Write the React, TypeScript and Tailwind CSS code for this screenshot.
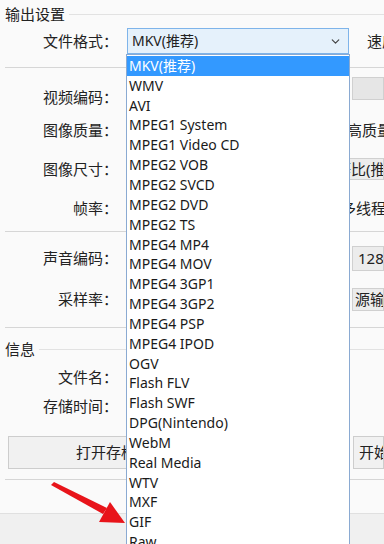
import { ChevronDown } from 'lucide-react';

const formats = [
  'MKV(推荐)',
  'WMV',
  'AVI',
  'MPEG1 System',
  'MPEG1 Video CD',
  'MPEG2 VOB',
  'MPEG2 SVCD',
  'MPEG2 DVD',
  'MPEG2 TS',
  'MPEG4 MP4',
  'MPEG4 MOV',
  'MPEG4 3GP1',
  'MPEG4 3GP2',
  'MPEG4 PSP',
  'MPEG4 IPOD',
  'OGV',
  'Flash FLV',
  'Flash SWF',
  'DPG(Nintendo)',
  'WebM',
  'Real Media',
  'WTV',
  'MXF',
  'GIF',
  'Raw',
];

function Label({ text }: { text: string }) {
  return <div className="w-[118px] shrink-0 text-right">{text}</div>;
}

function Separator() {
  return <div className="h-px bg-[#d6d6d6] ml-[5px]" />;
}

export default function App() {
  return (
    <div
      className="relative w-[384px] h-[544px] overflow-hidden bg-[#fafafa] text-[15px] text-[#222] leading-none"
      style={{ fontFamily: '"Noto Sans", "Noto Sans CJK SC", sans-serif' }}
    >
      {/* Output settings */}
      <div className="h-[28px] flex items-center pl-[5px]">
        <span className="pr-1">输出设置</span>
        <div className="flex-1 h-px bg-[#e2e2e2]" />
      </div>

      <div className="h-[26px] flex items-center whitespace-nowrap">
        <Label text="文件格式：" />
        <div className="ml-[9px] w-[222px] shrink-0 h-[26px] border border-[#7eb4ea] bg-[#e5f1fb] flex items-center justify-between pl-[4px] pr-[6px] text-[14px]">
          <span>MKV(推荐)</span>
          <ChevronDown className="w-[13px] h-[13px] text-[#444]" strokeWidth={2.2} />
        </div>
        <span className="ml-[18px] shrink-0">速度：</span>
      </div>

      <div className="h-[13px]" />
      <Separator />

      <div className="h-[38px] flex items-start pt-[17px] mt-[5px]">
        <Label text="视频编码：" />
        <div className="w-[231px] shrink-0" />
        <div className="flex-1 -mt-[13px] h-[23px] bg-[#e6e6e6] border border-[#d0d0d0] ml-[3px]" />
      </div>
      <div className="h-[38px] flex items-center whitespace-nowrap">
        <Label text="图像质量：" />
        <div className="w-[214px] shrink-0" />
        <span className="shrink-0">较高质量</span>
      </div>
      <div className="h-[40px] flex items-center">
        <Label text="图像尺寸：" />
        <div className="w-[231px] shrink-0" />
        <div className="flex-1 h-[22px] bg-[#ececec] border border-[#d0d0d0] flex items-center -ml-[14px] whitespace-nowrap overflow-hidden">
          <span>等比(推荐)</span>
        </div>
      </div>
      <div className="h-[38px] flex items-center whitespace-nowrap">
        <Label text="帧率：" />
        <div className="w-[223px] shrink-0" />
        <span className="shrink-0">多线程</span>
      </div>

      <div className="h-[4px]" />
      <Separator />

      <div className="h-[41px] flex items-center mt-[6px]">
        <Label text="声音编码：" />
        <div className="w-[234px] shrink-0" />
        <div className="flex-1 h-[25px] bg-[#ececec] border border-[#d0d0d0] flex items-center pl-[5px] whitespace-nowrap overflow-hidden">
          <span>128 kbps</span>
        </div>
      </div>
      <div className="h-[40px] flex items-center">
        <Label text="采样率：" />
        <div className="w-[234px] shrink-0" />
        <div className="flex-1 h-[23px] bg-[#ececec] border border-[#d0d0d0] flex items-center pl-[2px] whitespace-nowrap overflow-hidden">
          <span>源输入</span>
        </div>
      </div>

      <div className="h-[8px]" />
      <Separator />

      {/* Info */}
      <div className="h-[28px] flex items-center pl-[5px] mt-[7px]">
        <span className="pr-1">信息</span>
        <div className="flex-1 h-px bg-[#e2e2e2]" />
      </div>
      <div className="h-[29px] flex items-center">
        <Label text="文件名：" />
      </div>
      <div className="h-[29px] flex items-center">
        <Label text="存储时间：" />
      </div>

      <div className="flex items-center mt-[15px] h-[33px]">
        <button className="ml-[8px] w-[236px] shrink-0 h-[33px] bg-[#f1f1f1] border border-[#cdcdcd] flex items-center pl-[67px] whitespace-nowrap">
          打开存档目录
        </button>
        <button className="ml-[109px] flex-1 h-[33px] bg-[#f1f1f1] border border-[#cdcdcd] flex items-center pl-[5px] whitespace-nowrap overflow-hidden">
          开始
        </button>
      </div>

      <div className="h-[10px]" />
      <Separator />

      <div className="absolute left-0 right-0 bottom-0 h-[31px] bg-[#f0f0f0] border-t border-[#e0e0e0]" />

      {/* Dropdown list */}
      <div className="absolute left-[126px] top-[54px] w-[224px] h-[500px] bg-white border border-[#8aaad2] text-[14px] text-[#1a1a1a] z-10 pt-px">
        {formats.map((f, i) => (
          <div
            key={f}
            className={`h-[19.85px] flex items-center pl-[2px] whitespace-nowrap ${
              i === 0 ? 'bg-[#3399ff] text-white' : ''
            }`}
          >
            {f}
          </div>
        ))}
      </div>

      {/* Red arrow */}
      <svg className="absolute left-0 top-0 z-20" width="384" height="544" viewBox="0 0 384 544">
        <polygon points="51,485 54,482 107,508 103,514" fill="#e8141a" />
        <polygon points="125,523 110,502 99,522" fill="#e8141a" />
      </svg>
    </div>
  );
}
